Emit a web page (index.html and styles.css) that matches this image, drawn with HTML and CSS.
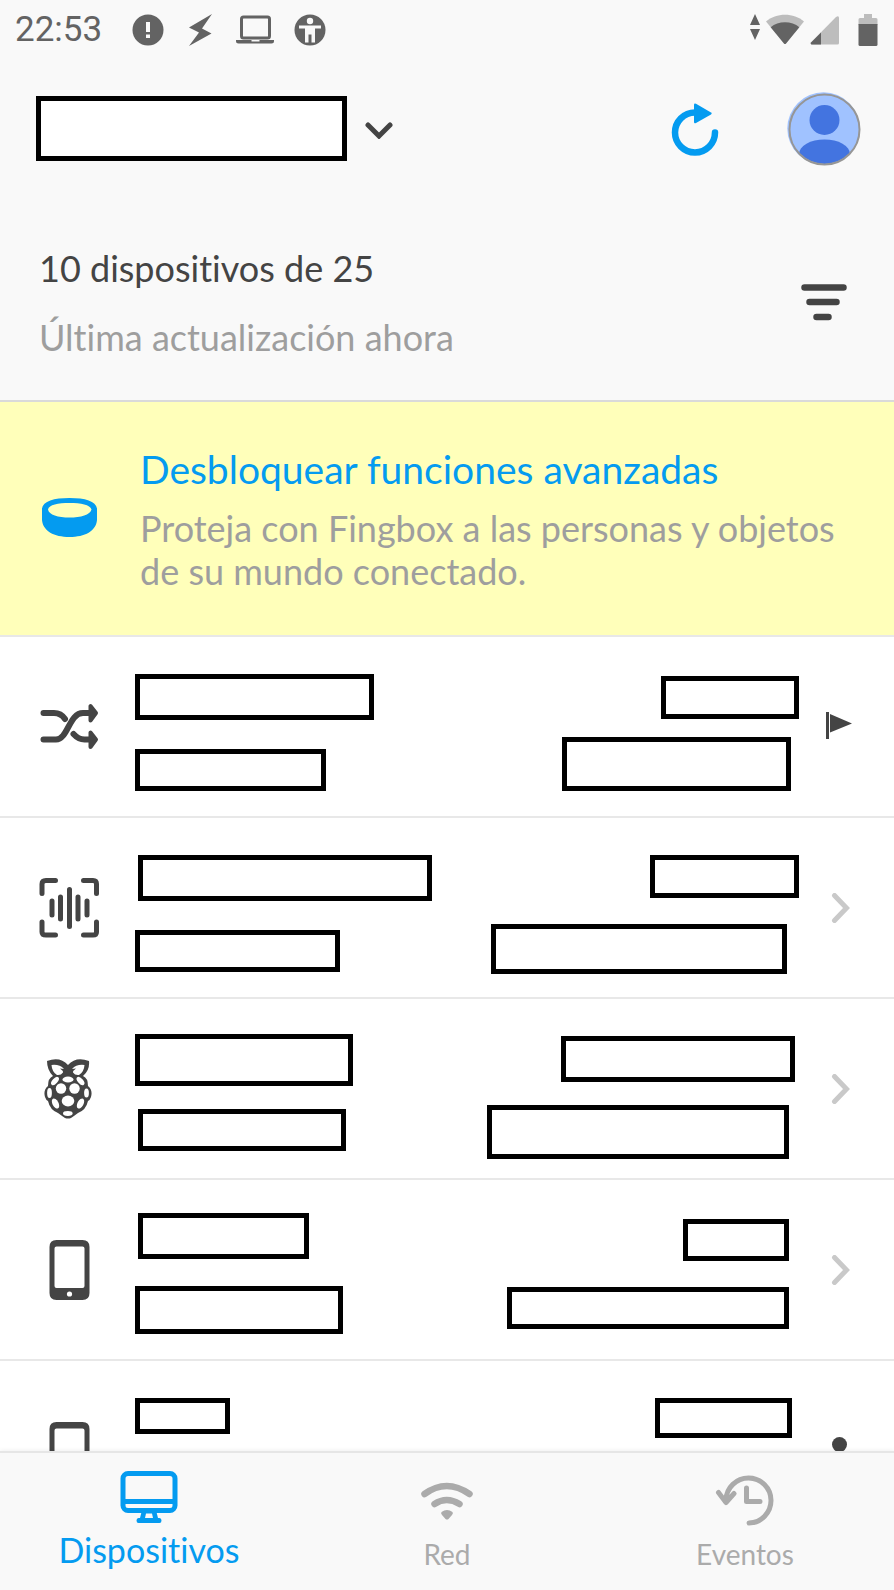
FILE: index.html
```html
<!DOCTYPE html>
<html lang="es">
<head>
<meta charset="utf-8">
<meta name="viewport" content="width=device-width, initial-scale=1">
<title>Dispositivos</title>
<link rel="stylesheet" href="styles.css">
</head>
<body>
<div class="app">
  <div class="status">
    <span class="clock">22:53</span>
    <svg class="status-alert" width="32" height="32" viewBox="0 0 32 32"><circle cx="16" cy="16" r="15.5" fill="#636363"/><path d="M14 8h4v10h-4zM14 20.500h4v3.500h-4z" fill="#f9f9f9"/></svg>
    <svg width="32" height="32" viewBox="0 0 32 32"><path d="M28 0 5 13.500l10 5L5 32l22.500-12.500-9.500-5z" fill="#636363"/></svg>
    <svg width="38" height="32" viewBox="0 0 38 32"><rect x="5.500" y="3" width="28" height="21" rx="2" fill="none" stroke="#636363" stroke-width="3"/><path d="M0 26h15.500v1.500h8V26H38v1a2.500 2.500 0 0 1-2.500 2.500h-33A2.500 2.500 0 0 1 0 27z" fill="#636363"/></svg>
    <svg width="32" height="32" viewBox="0 0 32 32"><circle cx="16" cy="16" r="15.500" fill="#636363"/><circle cx="16" cy="7" r="3.200" fill="#f9f9f9"/><path d="M5 11.500h22v3h-6V28.500h-3.500v-8h-3v8H11V14.500H5z" fill="#f9f9f9"/></svg>
    <span class="status-right">
      <svg width="10" height="32" viewBox="0 0 10 32"><path d="M5 0l5 11H0zM0 15h10L5 26z" fill="#636363"/></svg>
      <svg width="38" height="32" viewBox="0 0 38 32"><path d="M0 7.500C10-1.500 28-1.500 38 7.500L20 29.500q-1 1-2 0z" fill="#bdbdbd"/><path d="M4.700 13.200C12 6.500 26 6.500 33.300 13.200L20 29.500q-1 1-2 0z" fill="#636363"/></svg>
      <svg class="signal" width="30" height="32" viewBox="0 0 30 32"><path d="M1 28.500 26 3q3-2 3 1v25q0 1.500-1.500 1.500H1.500Q0 30 1 28.500z" fill="#bdbdbd"/><path d="M1 28.500 11 18.500v12H1.500Q0 30 1 28.500z" fill="#636363"/></svg>
      <svg width="20" height="34" viewBox="0 0 20 34"><path d="M6 1h8v4h4q1.500 0 1.500 1.500V12H.5V6.500Q.5 5 2 5h4z" fill="#bdbdbd"/><path d="M.5 11h19v20.500q0 1.500-1.500 1.500H2q-1.500 0-1.500-1.500z" fill="#636363"/></svg>
    </span>
  </div>

  <header class="toolbar">
    <button class="network" type="button" aria-label="Cambiar de red">
      <span class="mask mask-network"></span>
      <svg width="30" height="20" viewBox="0 0 30 20"><path d="M3 6l11 11L25 6" fill="none" stroke="#444" stroke-width="5" stroke-linecap="round"/></svg>
    </button>
    <button class="refresh" type="button" aria-label="Actualizar">
      <svg width="50" height="54" viewBox="0 0 50 54"><path d="M45 30.500A20 20 0 1 1 25 10.500" fill="none" stroke="#049bf0" stroke-width="6.500" stroke-linecap="round"/><path d="M24 3v17q0 2 2 1l15-8.500q1.500-1 0-2L26 1.800q-2-.8-2 1.200z" fill="#049bf0"/></svg>
    </button>
    <button class="account" type="button" aria-label="Cuenta">
      <svg width="74" height="74" viewBox="0 0 74 74"><defs><clipPath id="face"><circle cx="37.500" cy="37.500" r="34.500"/></clipPath></defs><circle cx="36.500" cy="36.500" r="36.200" fill="#a0c2ff"/><g clip-path="url(#face)" fill="#4374e0"><circle cx="37.500" cy="28" r="15"/><ellipse cx="37.500" cy="62" rx="25.500" ry="14.500"/></g><circle cx="37.500" cy="37.500" r="35" fill="none" stroke="#969696" stroke-width="2"/></svg>
    </button>
  </header>

  <section class="summary">
    <div>
      <h1 class="count">10 dispositivos de 25</h1>
      <p class="updated">Última actualización ahora</p>
    </div>
    <button class="filter" type="button" aria-label="Filtrar">
      <svg width="46" height="38" viewBox="0 0 46 38"><path d="M3.500 3.500h39M8.500 18h27M15.500 33h12" stroke="#444" stroke-width="6.500" stroke-linecap="round"/></svg>
    </button>
  </section>

  <a class="promo" href="#fingbox">
    <svg class="row-icon" width="60" height="60" viewBox="0 0 60 60"><path fill-rule="evenodd" d="M2 19.500C3 12 14 9 29.500 9S56 12 57 19.500V31C56 42 45 48 29.500 48S3 42 2 31zM8 20.500C9 26 18 28.500 29.500 28.500S50 26 51.500 20.500C50 15.500 41 14 29.500 14S9 15.500 8 20.500z" fill="#049bf0"/></svg>
    <span class="promo-text">
      <strong class="promo-title">Desbloquear funciones avanzadas</strong>
      <span class="promo-body">Proteja con Fingbox a las personas y objetos de su mundo conectado.</span>
    </span>
  </a>

  <main class="devices">
    <article class="device gateway">
      <svg class="row-icon" width="60" height="60" viewBox="0 0 60 60"><g fill="none" stroke="#444" stroke-width="6" stroke-linecap="round" stroke-linejoin="round"><path d="M4.500 16H15q7 0 11 6M4.500 42.500H17c12 0 13-26.500 27-26.500h8M34.500 37q5 5.500 11 5.500H52"/></g><path d="M51.500 9v14.500l5.500-7.500zM51.500 35.500V50l5.500-7.500z" fill="#444" stroke="#444" stroke-width="4" stroke-linejoin="round"/></svg>
      <div class="lines"><span class="mask name"></span><span class="mask detail"></span></div>
      <div class="lines lines-end"><span class="mask address"></span><span class="mask mac"></span></div>
      <svg class="mark" width="30" height="30" viewBox="0 0 30 30"><path d="M1 0h3v27H1zM5 2l22 9.500L5 20.500z" fill="#444"/></svg>
    </article>

    <article class="device scanner">
      <svg class="row-icon" width="60" height="60" viewBox="0 0 60 60"><g fill="none" stroke="#444" stroke-width="5" stroke-linecap="round"><path d="M16.500 2.500H7Q3 2.500 3 6v9.500M44.500 2.500H54q3.500 0 3.500 3.500v9.500M3 44v10q0 3 4 3h9.500M57.500 44v10q0 3-3.500 3h-9.500M13 23v14M21.500 19v22M30.500 11.500v37M39 19v22M48 23v14"/></g></svg>
      <div class="lines"><span class="mask name"></span><span class="mask detail"></span></div>
      <div class="lines lines-end"><span class="mask address"></span><span class="mask mac"></span></div>
      <svg class="mark" width="30" height="30" viewBox="0 0 30 30"><path d="M9.500 2.500l12 12.500L9.500 27.500" fill="none" stroke="#c9c9c9" stroke-width="5" stroke-linecap="round"/></svg>
    </article>

    <article class="device raspberry">
      <svg class="row-icon" width="60" height="60" viewBox="0 0 60 60"><path d="M8 2q13-5 21 4Q37-3 50 2q1 9-6 15 5 2 5 10 5 4 3 11-1 3-3 4-2 9-10 12-4 3-7 5-3 1-6 0-3-2-7-5-8-3-10-12-2-1-3-4-2-7 3-11 0-8 5-10Q8 11 8 2z" fill="#444"/><g fill="#fff"><path d="M12.500 6q8-1 12.500 4l-4-.500q3 2 3 4-2 3-6 2.500-5-3-5.500-10zM45.500 6q-8-1-12.500 4l4-.500q-3 2-3 4 2 3 6 2.500 5-3 5.500-10z"/><ellipse cx="29" cy="20.500" rx="5.500" ry="3"/><circle cx="22" cy="29.500" r="5.200"/><circle cx="35.500" cy="29.500" r="5.200"/><ellipse cx="29" cy="42" rx="6.300" ry="5.400"/><ellipse cx="16" cy="22" rx="5" ry="2.600" transform="rotate(-48 16 22)"/><ellipse cx="41.500" cy="22" rx="5" ry="2.600" transform="rotate(48 41.500 22)"/><ellipse cx="10.500" cy="34" rx="2.400" ry="5"/><ellipse cx="47.500" cy="34" rx="2.400" ry="4.600"/><ellipse cx="16.500" cy="44.500" rx="3" ry="5.500" transform="rotate(-28 16.500 44.500)"/><ellipse cx="41.500" cy="44.500" rx="3" ry="5.500" transform="rotate(28 41.500 44.500)"/><ellipse cx="28.800" cy="54.500" rx="4.800" ry="2.400"/></g></svg>
      <div class="lines"><span class="mask name"></span><span class="mask detail"></span></div>
      <div class="lines lines-end"><span class="mask address"></span><span class="mask mac"></span></div>
      <svg class="mark" width="30" height="30" viewBox="0 0 30 30"><path d="M9.500 2.500l12 12.500L9.500 27.500" fill="none" stroke="#c9c9c9" stroke-width="5" stroke-linecap="round"/></svg>
    </article>

    <article class="device phone">
      <svg class="row-icon" width="60" height="60" viewBox="0 0 60 60"><path fill-rule="evenodd" d="M17.500 0h26q7 0 7 7v46q0 7-7 7h-26q-7 0-7-7V7q0-7 7-7zM17.500 6.500q-2 0-2 2v37.500q0 2 2 2h26q2 0 2-2V8.500q0-2-2-2z" fill="#444"/><circle cx="30.500" cy="54" r="2.600" fill="#fff"/></svg>
      <div class="lines"><span class="mask name"></span><span class="mask detail"></span></div>
      <div class="lines lines-end"><span class="mask address"></span><span class="mask mac"></span></div>
      <svg class="mark" width="30" height="30" viewBox="0 0 30 30"><path d="M9.500 2.500l12 12.500L9.500 27.500" fill="none" stroke="#c9c9c9" stroke-width="5" stroke-linecap="round"/></svg>
    </article>

    <article class="device last">
      <svg class="row-icon" width="60" height="60" viewBox="0 0 60 60"><path fill-rule="evenodd" d="M17.500 1h26q7 0 7 7v46q0 6-7 6h-26q-7 0-7-6V8q0-7 7-7zM17.500 7.500q-2 0-2 2v37.500q0 2 2 2h26q2 0 2-2V9.500q0-2-2-2z" fill="#444"/></svg>
      <div class="lines"><span class="mask name"></span></div>
      <div class="lines lines-end"><span class="mask address"></span></div>
      <svg class="mark" width="30" height="30" viewBox="0 0 30 30"><circle cx="14.500" cy="8.500" r="7.500" fill="#444"/></svg>
    </article>
  </main>

  <nav class="tabs">
    <a class="tab active" href="#dispositivos">
      <svg width="58" height="54" viewBox="0 0 58 54"><g fill="none" stroke="#049bf0" stroke-width="5"><rect x="3" y="3.500" width="52" height="37" rx="5"/><path d="M3 31.500h52"/></g><path fill-rule="evenodd" d="M21.500 42h15l1.500 6h1.500q2 0 2 2.500T39.500 53h-21q-2 0-2-2.500t2-2.500H20zM26 43.500 25 48h8l-1-4.500z" fill="#049bf0"/></svg>
      <span>Dispositivos</span>
    </a>
    <a class="tab" href="#red">
      <svg width="54" height="46" viewBox="0 0 54 46"><g fill="none" stroke="#ababab" stroke-width="6.500" stroke-linecap="round"><path d="M4.500 14q22-16 45 0M14.500 24q12-8 25 0"/></g><path d="M21.500 32q5.500-4 11 0 1 1.500-.5 3l-3.500 4q-1.500 1-3 0L22 35q-1.500-1.500-.5-3z" fill="#ababab"/></svg>
      <span>Red</span>
    </a>
    <a class="tab" href="#eventos">
      <svg width="60" height="52" viewBox="0 0 60 52"><g fill="none" stroke="#ababab" stroke-width="5" stroke-linecap="round" stroke-linejoin="round"><path d="M11 26A22.500 22.500 0 1 1 34 49M3.500 18.500 11 28.500l8-9M31.500 14v13.500H45"/></g></svg>
      <span>Eventos</span>
    </a>
  </nav>
</div>
</body>
</html>
```
FILE: styles.css
```css
* {
  box-sizing: border-box;
}

body {
  margin: 0;
  background: #f9f9f9;
  color: #444;
  font-family: Lato, "Open Sans", sans-serif;
  font-variant-ligatures: none;
}

button {
  padding: 0;
  border: 0;
  background: none;
  cursor: pointer;
}

svg {
  display: block;
  flex: none;
}

a {
  color: inherit;
  text-decoration: none;
}

.app {
  display: flex;
  flex-direction: column;
  height: 100vh;
}

/* Status bar */
.status {
  display: flex;
  flex: none;
  align-items: center;
  gap: 20px;
  height: 60px;
  padding: 0 16px 0 15px;
}

.clock {
  color: #636363;
  font: 400 35px/60px Roboto, sans-serif;
}

.status-alert {
  margin-left: 10px;
}

.status-right {
  display: flex;
  align-items: center;
  gap: 6px;
  margin-left: auto;
}

.signal {
  margin-right: 12px;
}

/* Toolbar */
.toolbar {
  display: flex;
  flex: none;
  align-items: center;
  height: 137px;
  padding: 0 33px 0 36px;
}

.network {
  display: flex;
  align-items: center;
  gap: 18px;
  margin-right: auto;
}

.refresh {
  margin-right: 67px;
}

.mask {
  display: block;
  border: 5px solid #000;
  background: #fff;
}

.mask-network {
  width: 311px;
  height: 65px;
}

/* Summary */
.summary {
  display: flex;
  flex: none;
  justify-content: space-between;
  align-items: center;
  height: 205px;
  padding: 8px 47px 0 39px;
  border-bottom: 2px solid #dadada;
}

.count,
.updated {
  margin: 0;
  font-size: 36px;
  font-weight: 400;
  line-height: 69px;
}

.updated {
  color: #9e9e9e;
}

/* Promo */
.promo {
  display: flex;
  flex: none;
  align-items: center;
  gap: 40px;
  height: 235px;
  padding: 0 40px;
  border-bottom: 2px solid #e8e8e8;
  background: #ffffba;
}

.promo-text {
  display: grid;
  gap: 14px;
}

.promo-title {
  color: #049bf0;
  font-size: 39px;
  font-weight: 400;
  line-height: 48px;
}

.promo-body {
  color: #9e9e9e;
  font-size: 36px;
  line-height: 43px;
}

/* Device list */
.devices {
  flex: 1;
  min-height: 0;
  overflow: hidden;
  background: #fff;
}

.device {
  display: flex;
  align-items: center;
  height: 181px;
  padding: 0 39px;
  border-bottom: 2px solid #e8e8e8;
}

.lines {
  display: flex;
  flex: 1;
  flex-direction: column;
  align-self: stretch;
  justify-content: space-between;
  align-items: flex-start;
  padding: 37px 0 25px 36px;
}

.lines-end {
  align-items: flex-end;
  padding-left: 0;
}

.mark {
  margin-left: 26px;
}

.name,
.address {
  height: 46px;
}

.detail {
  height: 42px;
}

.mac {
  height: 54px;
}

.gateway .lines-end {
  padding-top: 39px;
}

.gateway .name {
  width: 239px;
}

.gateway .detail {
  width: 191px;
}

.gateway .address {
  width: 138px;
  height: 43px;
}

.gateway .mac {
  width: 229px;
  margin-right: 8px;
}

.scanner .name {
  width: 294px;
  margin-left: 3px;
}

.scanner .detail {
  width: 205px;
}

.scanner .address {
  width: 149px;
  height: 43px;
}

.scanner .lines-end {
  padding-bottom: 23px;
}

.scanner .mac {
  width: 296px;
  height: 50px;
  margin-right: 12px;
}

.raspberry .lines {
  padding-top: 35px;
  padding-bottom: 27px;
}

.raspberry .lines-end {
  padding-top: 37px;
  padding-right: 4px;
  padding-bottom: 19px;
}

.raspberry .name {
  width: 218px;
  height: 52px;
}

.raspberry .detail {
  width: 208px;
  margin-left: 3px;
}

.raspberry .address {
  width: 234px;
}

.raspberry .mac {
  width: 302px;
  margin-right: 6px;
}

.phone .lines {
  padding-top: 33px;
}

.phone .lines-end {
  padding-top: 39px;
  padding-right: 10px;
  padding-bottom: 30px;
}

.phone .name {
  width: 171px;
  margin-left: 3px;
}

.phone .detail {
  width: 208px;
  height: 48px;
}

.phone .address {
  width: 106px;
  height: 42px;
}

.phone .mac {
  width: 282px;
  height: 42px;
}

.last .lines-end {
  padding-right: 7px;
}

.last .name {
  width: 95px;
  height: 36px;
}

.last .address {
  width: 137px;
  height: 40px;
}

/* Bottom tabs */
.tabs {
  display: grid;
  flex: none;
  grid-template-columns: repeat(3, 1fr);
  height: 139px;
  border-top: 2px solid #e6e6e6;
  background: #f9f9f9;
  box-shadow: 0 -1px 4px rgba(0, 0, 0, 0.06);
}

.tab {
  display: flex;
  flex-direction: column;
  justify-content: flex-end;
  align-items: center;
  gap: 8px;
  padding-bottom: 16px;
  color: #ababab;
  font-size: 28px;
  line-height: 40px;
}

.tab.active {
  padding-bottom: 20px;
  gap: 6px;
  color: #049bf0;
  font-size: 34px;
}
```
